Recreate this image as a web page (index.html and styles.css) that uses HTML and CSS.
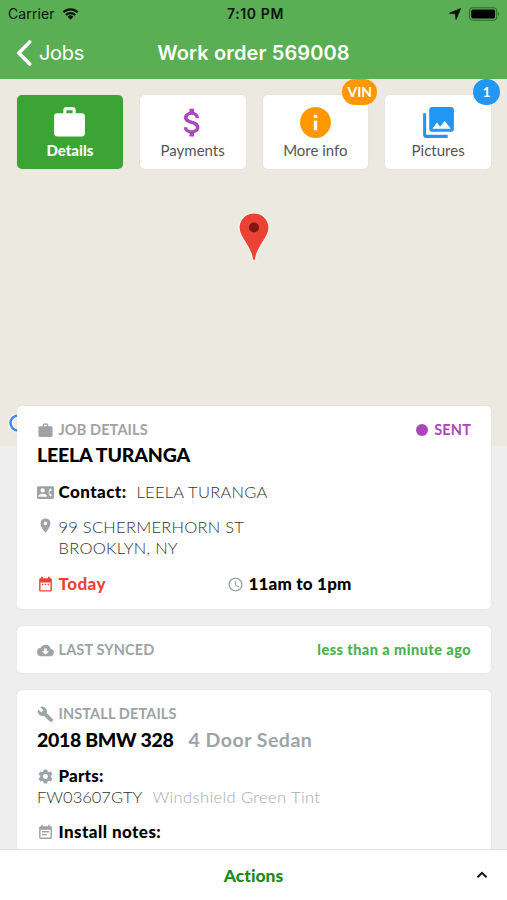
FILE: index.html
```html
<!DOCTYPE html>
<html lang="en">
<head>
<meta charset="utf-8">
<title>Work order 569008</title>
<link rel="stylesheet" href="styles.css">
</head>
<body>
<div class="app">
  <header class="header">
    <div class="status">
      <div class="status-left"><span class="carrier">Carrier</span>
        <svg class="wifi" viewBox="0 0 18 13"><path d="M1.200 4.700a11.200 11.200 0 0 1 15.600 0M3.900 7.600a7.300 7.300 0 0 1 10.200 0" fill="none" stroke="#0a150a" stroke-width="2.300"/><path d="M9 12.700 5.800 9.500a4.600 4.600 0 0 1 6.400 0z" fill="#0a150a"/></svg>
      </div>
      <span class="time">7:10 PM</span>
      <div class="status-right">
        <svg class="locate" viewBox="0 0 12 12"><path d="M11.700.4 7 11.500 6.300 5.800.4 5.200z" fill="#0a150a" stroke="#0a150a" stroke-width=".7" stroke-linejoin="round"/></svg>
        <svg class="battery" viewBox="0 0 32 14"><rect x=".6" y=".6" width="28" height="12.800" rx="3.500" fill="none" stroke="#2f6a2c" stroke-width="1.100"/><rect x="2.300" y="2.300" width="24.600" height="9.400" rx="1.800" fill="#000"/><path d="M30 5v4c1.600-.6 1.600-3.400 0-4z" fill="#2f6a2c"/></svg>
      </div>
    </div>
    <div class="nav">
      <a class="back"><svg class="chevron" viewBox="0 0 16 26"><path d="M13.700 2 2.800 13l10.900 11" fill="none" stroke="#fff" stroke-width="3.600" stroke-linecap="round" stroke-linejoin="round"/></svg><span class="back-label">Jobs</span></a>
      <h1 class="title"><span>Work order 569008</span></h1>
    </div>
  </header>

  <main class="content">
    <section class="map">
      <nav class="tabs">
        <a class="tab active">
          <svg class="tab-icon" viewBox="0 0 24 24"><path d="M10 2h4a2 2 0 0 1 2 2v2h4a2 2 0 0 1 2 2v11a2 2 0 0 1-2 2H4a2 2 0 0 1-2-2V8a2 2 0 0 1 2-2h4V4a2 2 0 0 1 2-2zm4 4V4h-4v2z"/></svg>
          <span>Details</span></a>
        <a class="tab">
          <svg class="tab-icon purple" viewBox="0 0 24 24"><path d="M11.800 10.900c-2.270-.59-3-1.200-3-2.150 0-1.090 1.010-1.850 2.700-1.850 1.780 0 2.440.85 2.500 2.100h2.210c-.07-1.720-1.120-3.300-3.210-3.810V3h-3v2.160c-1.940.42-3.500 1.680-3.500 3.610 0 2.310 1.910 3.460 4.700 4.130 2.500.6 3 1.480 3 2.410 0 .69-.49 1.790-2.700 1.790-2.060 0-2.870-.92-2.980-2.100H6.320c.12 2.190 1.760 3.420 3.680 3.830V21h3v-2.150c1.950-.37 3.500-1.500 3.500-3.550 0-2.840-2.430-3.810-4.700-4.400z"/></svg>
          <span>Payments</span></a>
        <a class="tab">
          <svg class="tab-icon orange" viewBox="0 0 24 24"><path d="M12 2a10 10 0 1 0 0 20 10 10 0 0 0 0-20zm1.100 15h-2.200v-6.200h2.200zm0-8h-2.200V6.900h2.200z"/></svg>
          <span>More info</span><b class="badge badge-vin">VIN</b></a>
        <a class="tab">
          <svg class="tab-icon blue" viewBox="0 0 24 24"><path d="M22 16V4a2 2 0 0 0-2-2H8a2 2 0 0 0-2 2v12a2 2 0 0 0 2 2h12a2 2 0 0 0 2-2zm-11-4 2.030 2.710L16 11l4 5H8zM2 6v14a2 2 0 0 0 2 2h14v-2H4V6z"/></svg>
          <span>Pictures</span><b class="badge badge-count">1</b></a>
      </nav>
      <svg class="pin" viewBox="0 0 32 50"><path d="M16 1C7.500 1 1 7.500 1 15.700c0 10.700 11.500 17 13.300 31 .3 2.400 3.100 2.400 3.400 0C19.500 32.700 31 26.400 31 15.700 31 7.500 24.500 1 16 1z" fill="#ea4335" stroke="#f8f4ee" stroke-width="1.200"/><circle cx="16" cy="15.500" r="5" fill="#7f1612"/></svg>
      <svg class="brand-mark" viewBox="0 0 20 20"><circle cx="10" cy="10" r="7.500" fill="none" stroke="#fff" stroke-width="5"/><circle cx="10" cy="10" r="7.500" fill="none" stroke="#4285f4" stroke-width="2.500"/></svg>
    </section>

    <div class="cards">
      <section class="card job">
        <div class="row head">
          <svg class="ic" viewBox="0 0 24 24"><path d="M10 2h4a2 2 0 0 1 2 2v2h4a2 2 0 0 1 2 2v11a2 2 0 0 1-2 2H4a2 2 0 0 1-2-2V8a2 2 0 0 1 2-2h4V4a2 2 0 0 1 2-2zm4 4V4h-4v2z"/></svg>
          <span class="label">JOB DETAILS</span>
          <span class="state"><i class="dot"></i><span class="sent">SENT</span></span>
        </div>
        <h2 class="name"><span class="customer">LEELA TURANGA</span></h2>
        <div class="row contact">
          <svg class="ic" viewBox="0 0 24 24"><path fill-rule="evenodd" d="M22 3H2a2 2 0 0 0-2 2v14a2 2 0 0 0 2 2h20a2 2 0 0 0 2-2V5a2 2 0 0 0-2-2zM8 6a3 3 0 1 1 0 6 3 3 0 0 1 0-6zm6 12H2v-1c0-2 4-3.100 6-3.100s6 1.100 6 3.100zm3.850-4h1.640L21 16l-2 2a8 8 0 0 1-2.300-4.100 7.200 7.200 0 0 1 0-3.800A8 8 0 0 1 19 6l2 2-1.510 2h-1.640a6 6 0 0 0 0 4z"/></svg>
          <b class="strong">Contact:</b><span class="thin contact-name">LEELA TURANGA</span>
        </div>
        <div class="row address">
          <svg class="ic" viewBox="0 0 24 24"><path d="M12 2a7 7 0 0 0-7 7c0 5.250 7 13 7 13s7-7.750 7-13a7 7 0 0 0-7-7zm0 9.500a2.500 2.500 0 1 1 0-5 2.500 2.500 0 0 1 0 5z"/></svg>
          <div><div><span class="thin">99 SCHERMERHORN ST</span></div><div><span class="thin">BROOKLYN, NY</span></div></div>
        </div>
        <div class="row when">
          <div class="half day"><svg class="ic red" viewBox="0 0 24 24"><path fill-rule="evenodd" d="M19 3h-1V1h-2.500v2h-7V1H6v2H5a2 2 0 0 0-2 2v15a2 2 0 0 0 2 2h14a2 2 0 0 0 2-2V5a2 2 0 0 0-2-2zm0 17H5V9h14zM7 11h2v2H7zm4 0h2v2h-2zm4 0h2v2h-2z"/></svg><b class="strong red">Today</b></div>
          <div class="half"><svg class="ic" viewBox="0 0 24 24"><path d="M12 2a10 10 0 1 0 0 20 10 10 0 0 0 0-20zm0 18a8 8 0 1 1 0-16 8 8 0 0 1 0 16zm.5-13H11v6l5.200 3.200.8-1.300-4.500-2.700z"/></svg><b class="strong hours">11am to 1pm</b></div>
        </div>
      </section>

      <section class="card sync">
        <div class="row head">
          <svg class="ic" viewBox="0 0 24 24"><path fill-rule="evenodd" d="M19.350 10.040A7.490 7.490 0 0 0 12 4C9.110 4 6.600 5.640 5.350 8.040A6 6 0 0 0 6 20h13a5 5 0 0 0 .35-9.960zM17 13l-5 5-5-5h3V9h4v4z"/></svg>
          <span class="label">LAST SYNCED</span><b class="ago">less than a minute ago</b>
        </div>
      </section>

      <section class="card install">
        <div class="row">
          <svg class="ic" viewBox="0 0 24 24"><path d="m22.700 19-9.100-9.100c.9-2.300.4-5-1.500-6.900-2-2-5-2.400-7.400-1.300L9 6 6 9 1.600 4.700C.4 7.100.9 10.100 2.900 12.100c1.900 1.900 4.600 2.400 6.900 1.500l9.100 9.100c.4.4 1 .4 1.400 0l2.300-2.300c.5-.4.5-1.100.1-1.400z"/></svg>
          <span class="label">INSTALL DETAILS</span>
        </div>
        <h2 class="name"><span class="vehicle">2018 BMW 328</span><span class="body-style">4 Door Sedan</span></h2>
        <div class="row parts">
          <svg class="ic" viewBox="0 0 24 24"><path d="M19.430 12.980c.04-.32.07-.64.07-.98s-.03-.66-.07-.98l2.110-1.650c.19-.15.24-.42.12-.64l-2-3.460c-.12-.22-.39-.3-.61-.22l-2.490 1c-.52-.4-1.080-.73-1.690-.98l-.38-2.650A.49.490 0 0 0 14 2h-4c-.25 0-.46.18-.49.42l-.38 2.650c-.61.25-1.170.59-1.690.98l-2.490-1c-.23-.09-.49 0-.61.22l-2 3.460c-.13.22-.07.49.12.64l2.110 1.650c-.04.32-.07.65-.07.98s.03.66.07.98l-2.110 1.650c-.19.15-.24.42-.12.64l2 3.460c.12.22.39.3.61.22l2.490-1c.52.4 1.080.73 1.690.98l.38 2.650c.03.24.24.42.49.42h4c.25 0 .46-.18.49-.42l.38-2.650c.61-.25 1.170-.59 1.690-.98l2.490 1c.23.09.49 0 .61-.22l2-3.460c.12-.22.07-.49-.12-.64zM12 15.500a3.500 3.500 0 1 1 0-7 3.500 3.500 0 0 1 0 7z"/></svg>
          <b class="strong parts-label">Parts:</b>
        </div>
        <div class="row part"><span class="thin part-code">FW03607GTY</span><span class="thin part-desc">Windshield Green Tint</span></div>
        <div class="row notes">
          <svg class="ic" viewBox="0 0 24 24"><path d="M17 10H7v2h10zm2-7h-1V1h-2v2H8V1H6v2H5a2 2 0 0 0-2 2v14a2 2 0 0 0 2 2h14a2 2 0 0 0 2-2V5a2 2 0 0 0-2-2zm0 16H5V8h14zm-5-5H7v2h7z"/></svg>
          <b class="strong">Install notes:</b>
        </div>
      </section>
    </div>
  </main>

  <footer class="actions"><span></span><b class="act">Actions</b><svg class="up" viewBox="0 0 12 8"><path d="m1.500 6.300 4.500-4.400 4.500 4.400" fill="none" stroke="#111" stroke-width="2"/></svg></footer>
</div>
</body>
</html>
```
FILE: styles.css
```css
* { box-sizing: border-box; }
body { margin: 0; background: #eee; font-family: Lato, "Open Sans", sans-serif; font-variant-ligatures: none; color: #000; }
.app { width: 507px; height: 900px; display: flex; flex-direction: column; overflow: hidden; }
svg { display: block; flex: none; }
h1, h2 { margin: 0; }
span, b { white-space: nowrap; }

.header { flex: none; height: 79px; background: #5aae54; font-family: Inter, Roboto, sans-serif; }
.status { height: 27px; padding: 0 7px 0 8px; display: grid; grid-template-columns: 1fr auto 1fr; align-items: center; font-size: 14px; color: #0a150a; }
.status-left, .status-right { display: flex; align-items: center; }
.status-right { justify-content: flex-end; gap: 8px; }
.carrier { letter-spacing: .1px; }
.time { font-weight: 600; letter-spacing: .6px; padding-left: 3px; }
.wifi { width: 17px; height: 12px; margin-left: 7px; }
.locate { width: 12px; height: 12px; }
.battery { width: 31px; height: 14px; }
.nav { height: 52px; padding: 0 16px; display: grid; grid-template-columns: 1fr auto 1fr; align-items: center; color: #fff; }
.back { display: flex; align-items: center; gap: 7px; font-size: 20px; letter-spacing: -.3px; }
.chevron { width: 16px; height: 26px; }
.title { font-size: 20px; font-weight: 600; line-height: 52px; letter-spacing: .12px; }

.content { flex: 1; min-height: 0; overflow: hidden; }
.map { position: relative; height: 367px; background: #ece9e1; padding: 16px 16px 0 17px; }
.tabs { display: grid; grid-template-columns: repeat(4, 1fr); gap: 17px; }
.tab { position: relative; height: 74px; border-radius: 5px; background: #fff; box-shadow: 0 0 2px rgba(0,0,0,.07); display: flex; flex-direction: column; align-items: center; padding-top: 9px; font-size: 15px; line-height: 18px; color: #555; }
.tab.active { background: #3ba435; color: #fff; font-weight: 900; }
.tab-icon { width: 37px; height: 37px; fill: #fff; }
.tab-icon.purple { fill: #ab47bc; }
.tab-icon.orange { fill: #ff9800; }
.tab-icon.blue { fill: #2196f3; }
.badge { position: absolute; top: -16px; right: -9px; height: 26px; line-height: 26px; border-radius: 13px; color: #fff; text-align: center; font-size: 14px; }
.badge-vin { width: 35px; background: #ff9800; }
.badge-count { width: 27px; background: #2196f3; }
.pin { width: 32px; height: 50px; margin: 43px auto 0 221px; }
.brand-mark { position: absolute; left: 8px; top: 334px; width: 20px; height: 20px; }

.cards { position: relative; margin-top: -40px; padding: 0 16px 0 17px; display: flex; flex-direction: column; gap: 17px; }
.card { background: #fff; border-radius: 5px; padding: 0 20px; box-shadow: 0 0 2px rgba(0,0,0,.08); }
.job { height: 203px; padding-top: 14px; }
.sync { height: 47px; padding-top: 14px; }
.install { height: 180px; padding-top: 14px; }
.row { display: flex; align-items: center; height: 20px; line-height: 20px; font-size: 16.5px; }
.ic { width: 17px; height: 17px; margin-right: 4.5px; fill: #9da3a7; }
.ic.red { fill: #ea4335; }
.label { font-size: 14.5px; font-weight: 700; color: #9da3a7; letter-spacing: .12px; }
.state { margin-left: auto; display: flex; align-items: center; gap: 6px; color: #ab47bc; font-weight: 700; font-size: 14.5px; letter-spacing: .15px; }
.dot { width: 12px; height: 12px; border-radius: 50%; background: #ab47bc; }
.name { height: 24px; line-height: 24px; margin-top: 4px; font-size: 19.5px; font-weight: 900; display: flex; }
.job .name { margin-top: 3px; }
.customer { letter-spacing: -.17px; }
.vehicle { letter-spacing: -.33px; }
.body-style { margin-left: 15px; color: #9da3a7; font-weight: 700; letter-spacing: .5px; }
.contact { margin-top: 15px; }
.strong { font-size: 17px; font-weight: 900; letter-spacing: .43px; }
.strong.red { color: #ea4335; }
.strong.hours, .strong.parts-label { letter-spacing: .2px; }
.thin { font-weight: 300; color: #333; letter-spacing: .25px; }
.contact-name { margin-left: 10px; }
.address { margin-top: 15px; height: 42px; line-height: 21px; align-items: flex-start; }
.when { margin-top: 15px; }
.half { flex: 1; display: flex; align-items: center; }
.day { flex: 0 0 190px; }
.ago { margin-left: auto; font-size: 14.5px; color: #4caf50; font-weight: 900; letter-spacing: .45px; }
.parts { margin-top: 14px; }
.part { margin-top: 1px; }
.part-code { letter-spacing: 0; }
.part-desc { margin-left: 10px; color: #a6aaad; letter-spacing: .4px; }
.notes { margin-top: 15px; }

.actions { flex: none; height: 51px; border-top: 1px solid #e2e2e2; background: #fff; padding: 0 19px; display: grid; grid-template-columns: 1fr auto 1fr; align-items: center; }
.act { color: #1f8a1c; font-size: 17.5px; font-weight: 900; }
.up { width: 12px; height: 8px; justify-self: end; }
```
